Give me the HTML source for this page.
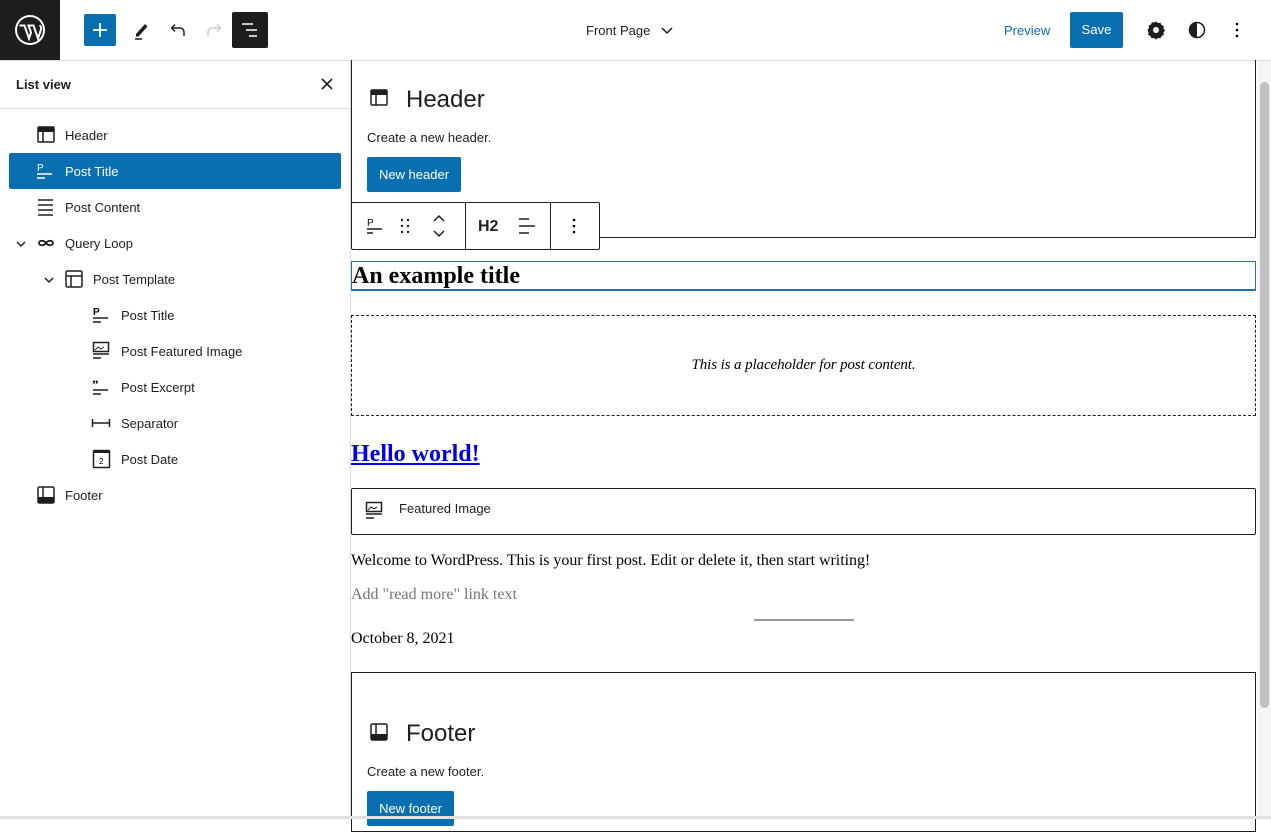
<!DOCTYPE html>
<html><head><meta charset="utf-8"><style>
*{box-sizing:border-box;margin:0;padding:0}
body{width:1271px;height:819px;overflow:hidden;background:#fff;font-family:"Liberation Sans",sans-serif;color:#1e1e1e;position:relative}
.a{position:absolute}
.top{left:0;top:0;width:1271px;height:61px;border-bottom:1px solid #ddd;background:#fff}
.li{position:absolute;left:0;height:36px;width:341px;font-size:13px;line-height:37px}
.li svg{position:absolute;top:8px}
.li span{position:absolute}
.serif{font-family:"Liberation Serif",serif}
.btn{background:#0a6fb0;color:#fff;font-size:13px;border-radius:2px;text-align:center}
</style></head><body>
<div class="a top"></div>
<div class="a" style="left:0;top:0;width:60px;height:60px;background:#1e1e1e"></div>
<svg class="a" style="left:14px;top:14px" width="32" height="32" viewBox="0 0 32 32"><circle cx="16" cy="16" r="15" fill="#fff"/><circle cx="16" cy="16" r="13" fill="#1e1e1e"/><path d="M5.5 11.5h5l4.5 13 2-6-2.5-7h2.5M14 11.5h5.5l4.5 13 3-9c.5-2-.5-3.5-1.5-4" fill="none" stroke="#fff" stroke-width="2"/></svg>
<div class="a" style="left:84px;top:14px;width:32px;height:32px;background:#0a6fb0;border-radius:2px"></div>
<svg class="a" style="left:90px;top:20px" width="20" height="20"><path d="M10 3v14M3 10h14" stroke="#fff" stroke-width="1.8"/></svg>
<svg class="a" style="left:130px;top:18px" width="24" height="24"><path d="M6 16l9-10 2.5 2.5-9 10H6z" fill="#1e1e1e"/><path d="M5 21h7" stroke="#1e1e1e" stroke-width="1.5"/></svg>
<svg class="a" style="left:166px;top:18px" width="24" height="24"><path d="M18 18v-4a4 4 0 0 0-4-4H6M9 6.5L5.5 10 9 13.5" fill="none" stroke="#1e1e1e" stroke-width="1.5"/></svg>
<svg class="a" style="left:202px;top:18px" width="24" height="24"><path d="M6 18v-4a4 4 0 0 1 4-4h8M15 6.5l3.5 3.5-3.5 3.5" fill="none" stroke="#ccc" stroke-width="1.5"/></svg>
<div class="a" style="left:232px;top:12px;width:36px;height:36px;background:#1e1e1e;border-radius:2px"></div>
<svg class="a" style="left:238px;top:18px" width="24" height="24"><path d="M4 6h11M8 12h11M11 18h8" stroke="#fff" stroke-width="1.5"/></svg>
<div class="a" style="left:586px;top:23px;font-size:13px">Front Page</div>
<svg class="a" style="left:660px;top:25px" width="14" height="12"><path d="M2 3l5 5 5-5" fill="none" stroke="#1e1e1e" stroke-width="1.5"/></svg>
<div class="a" style="left:1004px;top:23px;font-size:13px;color:#0a6fb0">Preview</div>
<div class="a btn" style="left:1070px;top:12px;width:53px;height:36px;line-height:36px">Save</div>
<svg class="a" style="left:1146px;top:20px" width="20" height="20" viewBox="0 0 20 20"><path d="M10 1.5l2 1.5 2.5-.3 1 2.3 2.3 1-.3 2.5 1.5 2-1.5 2 .3 2.5-2.3 1-1 2.3-2.5-.3-2 1.5-2-1.5-2.5.3-1-2.3-2.3-1 .3-2.5L1.5 10 3 8l-.3-2.5 2.3-1 1-2.3 2.5.3z" fill="#1e1e1e"/><circle cx="10" cy="10" r="3" fill="#fff"/></svg>
<svg class="a" style="left:1187px;top:20px" width="20" height="20"><circle cx="10" cy="10" r="7.5" fill="none" stroke="#1e1e1e" stroke-width="1.5"/><path d="M10 2.5a7.5 7.5 0 0 0 0 15z" fill="#1e1e1e"/></svg>
<svg class="a" style="left:1227px;top:20px" width="20" height="20"><circle cx="10" cy="4" r="1.3"/><circle cx="10" cy="10" r="1.3"/><circle cx="10" cy="16" r="1.3"/></svg>

<div class="a" style="left:350px;top:61px;width:1px;height:758px;background:#ddd"></div>
<div class="a" style="left:16px;top:77px;font-size:13px;font-weight:bold">List view</div>
<svg class="a" style="left:320px;top:77px" width="14" height="14"><path d="M2 2l10 10M12 2L2 12" stroke="#1e1e1e" stroke-width="1.6"/></svg>
<div class="a" style="left:0;top:108px;width:350px;height:1px;background:#ddd"></div>

<div class="li" style="top:117px"><svg style="left:36px" width="20" height="20"><rect x="2" y="2" width="16" height="15" rx="1" fill="none" stroke="#1e1e1e" stroke-width="1.5"/><rect x="2" y="2" width="16" height="5" fill="#1e1e1e"/><path d="M7 7v10" stroke="#1e1e1e" stroke-width="1.5"/></svg><span style="left:65px">Header</span></div>
<div class="li" style="top:153px;left:9px;width:332px;background:#0a6fb0;color:#fff;border-radius:2px"><svg style="left:27px" width="20" height="20"><text x="1" y="10" font-size="10" font-family="Liberation Sans" fill="#fff">P</text><path d="M1 13h15M1 17h8" stroke="#fff" stroke-width="1.5"/></svg><span style="left:56px">Post Title</span></div>
<div class="li" style="top:189px"><svg style="left:36px" width="20" height="20"><path d="M2 3h15M2 8h15M2 13h15M2 18h15" stroke="#1e1e1e" stroke-width="1.5"/></svg><span style="left:65px">Post Content</span></div>
<div class="li" style="top:225px"><svg style="left:14px" width="14" height="20"><path d="M3 9l4 4 4-4" fill="none" stroke="#1e1e1e" stroke-width="1.5"/></svg><svg style="left:36px" width="20" height="20"><path d="M10 10c-2-3-7-3-7 0s5 3 7 0 7-3 7 0-5 3-7 0" fill="none" stroke="#1e1e1e" stroke-width="1.8"/></svg><span style="left:65px">Query Loop</span></div>
<div class="li" style="top:261px"><svg style="left:42px" width="14" height="20"><path d="M3 9l4 4 4-4" fill="none" stroke="#1e1e1e" stroke-width="1.5"/></svg><svg style="left:64px" width="20" height="20"><rect x="2" y="2" width="16" height="16" rx="1.5" fill="none" stroke="#1e1e1e" stroke-width="1.5"/><path d="M2 7h16M7 7v11" stroke="#1e1e1e" stroke-width="1.5"/></svg><span style="left:93px">Post Template</span></div>
<div class="li" style="top:297px"><svg style="left:92px" width="20" height="20"><text x="1" y="10" font-size="10" font-family="Liberation Sans" font-weight="bold">P</text><path d="M1 13h15M1 17h8" stroke="#1e1e1e" stroke-width="1.5"/></svg><span style="left:121px">Post Title</span></div>
<div class="li" style="top:333px"><svg style="left:92px" width="20" height="20"><rect x="1.5" y="1.5" width="15" height="9" fill="none" stroke="#1e1e1e" stroke-width="1.5"/><path d="M3 9l3-3 3 2 3-2" fill="none" stroke="#1e1e1e"/><path d="M1 13h16M1 17h8" stroke="#1e1e1e" stroke-width="1.5"/></svg><span style="left:121px">Post Featured Image</span></div>
<div class="li" style="top:369px"><svg style="left:92px" width="20" height="20"><text x="0" y="12" font-size="13" font-family="Liberation Serif" font-weight="bold">”</text><path d="M1 13h15M1 17h8" stroke="#1e1e1e" stroke-width="1.5"/></svg><span style="left:121px">Post Excerpt</span></div>
<div class="li" style="top:405px"><svg style="left:91px" width="20" height="20"><path d="M1 10h18M1.5 6v8M18.5 6v8" stroke="#1e1e1e" stroke-width="1.5"/></svg><span style="left:121px">Separator</span></div>
<div class="li" style="top:441px"><svg style="left:92px" width="20" height="20"><rect x="1.5" y="1.5" width="16" height="17" rx="1" fill="none" stroke="#1e1e1e" stroke-width="1.5"/><path d="M1.5 3h16" stroke="#1e1e1e" stroke-width="2"/><text x="7" y="15" font-size="8" font-family="Liberation Sans">2</text></svg><span style="left:121px">Post Date</span></div>
<div class="li" style="top:477px"><svg style="left:36px" width="20" height="20"><rect x="2" y="2" width="16" height="16" rx="1.5" fill="none" stroke="#1e1e1e" stroke-width="1.5"/><rect x="2" y="12" width="16" height="6" fill="#1e1e1e"/><path d="M7 2v10" stroke="#1e1e1e" stroke-width="1.5"/></svg><span style="left:65px">Footer</span></div>

<div class="a" style="left:1258px;top:61px;width:13px;height:758px;background:#f4f4f4"></div>
<div class="a" style="left:1260px;top:82px;width:9px;height:626px;background:#c1c1c1;border-radius:5px"></div>
<div class="a" style="left:351px;top:60px;width:905px;height:178px;border:1px solid #1e1e1e;border-top:none"></div>
<svg class="a" style="left:369px;top:88px" width="20" height="20"><rect x="2" y="2" width="16" height="15" rx="1" fill="none" stroke="#1e1e1e" stroke-width="1.5"/><rect x="2" y="2" width="16" height="5" fill="#1e1e1e"/><path d="M7 7v10" stroke="#1e1e1e" stroke-width="1.5"/></svg>
<div class="a" style="left:406px;top:86px;font-size:24px">Header</div>
<div class="a" style="left:367px;top:130px;font-size:13px">Create a new header.</div>
<div class="a btn" style="left:367px;top:157px;width:94px;height:35px;line-height:35px">New header</div>

<div class="a" style="left:351px;top:202px;width:249px;height:48px;border:1px solid #1e1e1e;background:#fff;border-radius:2px"></div>
<div class="a" style="left:465px;top:202px;width:1px;height:48px;background:#1e1e1e"></div>
<div class="a" style="left:550px;top:202px;width:1px;height:48px;background:#1e1e1e"></div>
<svg class="a" style="left:366px;top:216px" width="20" height="20"><text x="1" y="10" font-size="10" font-family="Liberation Sans">P</text><path d="M1 13h15M1 17h6" stroke="#1e1e1e" stroke-width="1.5"/></svg>
<svg class="a" style="left:396px;top:216px" width="20" height="20"><g fill="#1e1e1e"><circle cx="6" cy="4" r="1.2"/><circle cx="12" cy="4" r="1.2"/><circle cx="6" cy="10" r="1.2"/><circle cx="12" cy="10" r="1.2"/><circle cx="6" cy="16" r="1.2"/><circle cx="12" cy="16" r="1.2"/></g></svg>
<svg class="a" style="left:430px;top:212px" width="18" height="28"><path d="M4 9l5-5 5 5M4 19l5 5 5-5" fill="none" stroke="#1e1e1e" stroke-width="1.5"/></svg>
<div class="a" style="left:478px;top:218px;font-size:16px;font-weight:bold">H2</div>
<svg class="a" style="left:517px;top:216px" width="20" height="20"><path d="M2 3h10M2 10h16M2 17h10" stroke="#1e1e1e" stroke-width="1.5"/></svg>
<svg class="a" style="left:564px;top:216px" width="20" height="20"><circle cx="10" cy="4" r="1.3"/><circle cx="10" cy="10" r="1.3"/><circle cx="10" cy="16" r="1.3"/></svg>

<div class="a serif" style="left:351px;top:261px;width:905px;height:30px;border:1px solid #2271b1;border-width:1px 1px 2px 1px;font-size:24px;font-weight:bold;line-height:29px;color:#000">An example title</div>
<div class="a" style="left:351px;top:315px;width:905px;height:101px;border:1px dashed #1e1e1e"></div>
<div class="a serif" style="left:351px;top:357px;width:905px;text-align:center;font-size:15px;font-style:italic;color:#000;letter-spacing:-0.1px">This is a placeholder for post content.</div>
<div class="a serif" style="left:351px;top:441px;font-size:24px;font-weight:bold;color:#0000ee;text-decoration:underline">Hello world!</div>
<div class="a" style="left:351px;top:488px;width:905px;height:47px;border:1px solid #1e1e1e;border-radius:2px"></div>
<svg class="a" style="left:365px;top:501px" width="20" height="20"><rect x="1.5" y="1.5" width="15" height="9" fill="none" stroke="#1e1e1e" stroke-width="1.5"/><path d="M3 9l3-3 3 2 3-2" fill="none" stroke="#1e1e1e"/><path d="M1 13h16M1 17h8" stroke="#1e1e1e" stroke-width="1.5"/></svg>
<div class="a" style="left:399px;top:501px;font-size:13px">Featured Image</div>
<div class="a serif" style="left:351px;top:552px;font-size:16px;color:#000;letter-spacing:-0.05px">Welcome to WordPress. This is your first post. Edit or delete it, then start writing!</div>
<div class="a serif" style="left:351px;top:586px;font-size:16px;color:#757575">Add "read more" link text</div>
<div class="a" style="left:754px;top:619px;width:100px;height:2px;background:#999"></div>
<div class="a serif" style="left:351px;top:630px;font-size:16px;color:#000">October 8, 2021</div>
<div class="a" style="left:351px;top:672px;width:905px;height:160px;border:1px solid #1e1e1e"></div>
<svg class="a" style="left:369px;top:722px" width="20" height="20"><rect x="2" y="2" width="16" height="16" rx="1.5" fill="none" stroke="#1e1e1e" stroke-width="1.5"/><rect x="2" y="12" width="16" height="6" fill="#1e1e1e"/><path d="M7 2v10" stroke="#1e1e1e" stroke-width="1.5"/></svg>
<div class="a" style="left:406px;top:720px;font-size:24px">Footer</div>
<div class="a" style="left:367px;top:764px;font-size:13px">Create a new footer.</div>
<div class="a btn" style="left:367px;top:791px;width:87px;height:35px;line-height:35px">New footer</div>
<div class="a" style="left:0;top:816px;width:1271px;height:3px;background:#e0e0e0"></div>
</body></html>
